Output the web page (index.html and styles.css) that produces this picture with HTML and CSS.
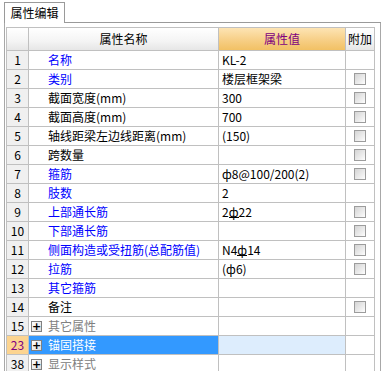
FILE: index.html
```html
<!DOCTYPE html>
<html lang="zh-CN">
<head>
<meta charset="utf-8">
<title>属性编辑</title>
<link rel="stylesheet" href="styles.css">
</head>
<body>
<div class="tabbar">
  <div class="tab">属性编辑</div>
  <div class="tabfill"></div>
</div>
<div class="panel">
  <div class="grid">
    <div class="hd"></div>
    <div class="hd">属性名称</div>
    <div class="hd hd-val">属性值</div>
    <div class="hd">附加</div>

    <div class="num">1</div><div class="name blue">名称</div><div class="val">KL-2</div><div class="add"></div>
    <div class="num">2</div><div class="name blue">类别</div><div class="val">楼层框架梁</div><div class="add"><span class="cb"></span></div>
    <div class="num">3</div><div class="name">截面宽度(mm)</div><div class="val">300</div><div class="add"><span class="cb"></span></div>
    <div class="num">4</div><div class="name">截面高度(mm)</div><div class="val">700</div><div class="add"><span class="cb"></span></div>
    <div class="num">5</div><div class="name">轴线距梁左边线距离(mm)</div><div class="val">(150)</div><div class="add"><span class="cb"></span></div>
    <div class="num">6</div><div class="name">跨数量</div><div class="val"></div><div class="add"><span class="cb"></span></div>
    <div class="num">7</div><div class="name blue">箍筋</div><div class="val">ф8@100/200(2)</div><div class="add"><span class="cb"></span></div>
    <div class="num">8</div><div class="name blue">肢数</div><div class="val">2</div><div class="add"></div>
    <div class="num">9</div><div class="name blue">上部通长筋</div><div class="val">2<span class="hrb">ф</span>22</div><div class="add"><span class="cb"></span></div>
    <div class="num">10</div><div class="name blue">下部通长筋</div><div class="val"></div><div class="add"><span class="cb"></span></div>
    <div class="num">11</div><div class="name blue">侧面构造或受扭筋(总配筋值)</div><div class="val">N4<span class="hrb">ф</span>14</div><div class="add"><span class="cb"></span></div>
    <div class="num">12</div><div class="name blue">拉筋</div><div class="val">(ф6)</div><div class="add"><span class="cb"></span></div>
    <div class="num">13</div><div class="name blue">其它箍筋</div><div class="val"></div><div class="add"></div>
    <div class="num">14</div><div class="name">备注</div><div class="val"></div><div class="add"><span class="cb"></span></div>
    <div class="num">15</div><div class="name grp"><span class="plus">+</span>其它属性</div><div class="val"></div><div class="add"></div>
    <div class="num num-sel">23</div><div class="name grp sel"><span class="plus">+</span>锚固搭接</div><div class="val val-sel"></div><div class="add"></div>
    <div class="num">38</div><div class="name grp"><span class="plus">+</span>显示样式</div><div class="val"></div><div class="add"></div>
  </div>
</div>
</body>
</html>
```

FILE: styles.css
```css
html, body {
  margin: 0;
  padding: 0;
  overflow: hidden;
  background: #ffffff;
}
body {
  font-family: "Noto Sans CJK SC", "Noto Sans", sans-serif;
  font-size: 12px;
  color: #000;
  padding-top: 2px;
}
.tabbar {
  display: flex;
  padding-left: 4px;
  height: 21px;
}
.tab {
  border: 1px solid #9a9a9a;
  border-bottom: none;
  width: 59px;
  box-sizing: content-box;
  display: flex;
  align-items: center;
  justify-content: center;
  line-height: 12px;
  background: #fff;
}
.tabfill {
  flex: 1;
  border-bottom: 1px solid #9a9a9a;
  margin-right: 1px;
}
.panel {
  margin: 0 1px 0 4px;
  border-left: 1px solid #a8a8a8;
  border-right: 1px solid #a8a8a8;
  padding: 4px 0 0 1px;
  height: 400px;
}
.grid {
  display: grid;
  grid-template-columns: 21px 189px 126px 28px;
  grid-template-rows: 22px;
  grid-auto-rows: 18px;
  gap: 1px;
  background: #c0c0c0;
  border: 1px solid #c0c0c0;
  width: max-content;
}
.grid > div {
  display: flex;
  align-items: center;
  white-space: nowrap;
  overflow: hidden;
  line-height: 12px;
}
.hd {
  background: linear-gradient(#ffffff, #f4f4f4 60%, #e6e6e6);
  justify-content: center;
}
.hd-val {
  background: linear-gradient(#fde4b4, #f6cd82 60%, #f2c164);
  color: #800080;
}
.num {
  background: #f0f0f0;
  justify-content: center;
}
.num-sel {
  background: #fcd490;
  color: #800080;
}
.name {
  background: #fff;
  padding-left: 19px;
}
.blue { color: #0000ff; }
.grp {
  color: #808080;
  padding-left: 2px;
}
.sel {
  background: #3399ff;
  color: #fff;
}
.plus {
  width: 9px;
  height: 9px;
  border: 1px solid #808080;
  background: linear-gradient(135deg, #ffffff, #dcdcdc);
  color: #000;
  font-size: 11px;
  line-height: 9px;
  text-align: center;
  margin-right: 6px;
  font-family: "DejaVu Sans", sans-serif;
  font-weight: bold;
}
.val {
  background: #fff;
  padding-left: 3px;
}
.val-sel {
  background: #ddedfd;
}
.add {
  background: #fff;
  justify-content: center;
}
.cb {
  width: 10px;
  height: 10px;
  border: 1px solid #9c9c9c;
  background: linear-gradient(135deg, #d4d4d4, #f0f0f0 70%, #ffffff);
}
.hrb {
  display: inline-block;
  border-bottom: 1px solid #000;
  line-height: 10px;
  height: 10px;
}
```
